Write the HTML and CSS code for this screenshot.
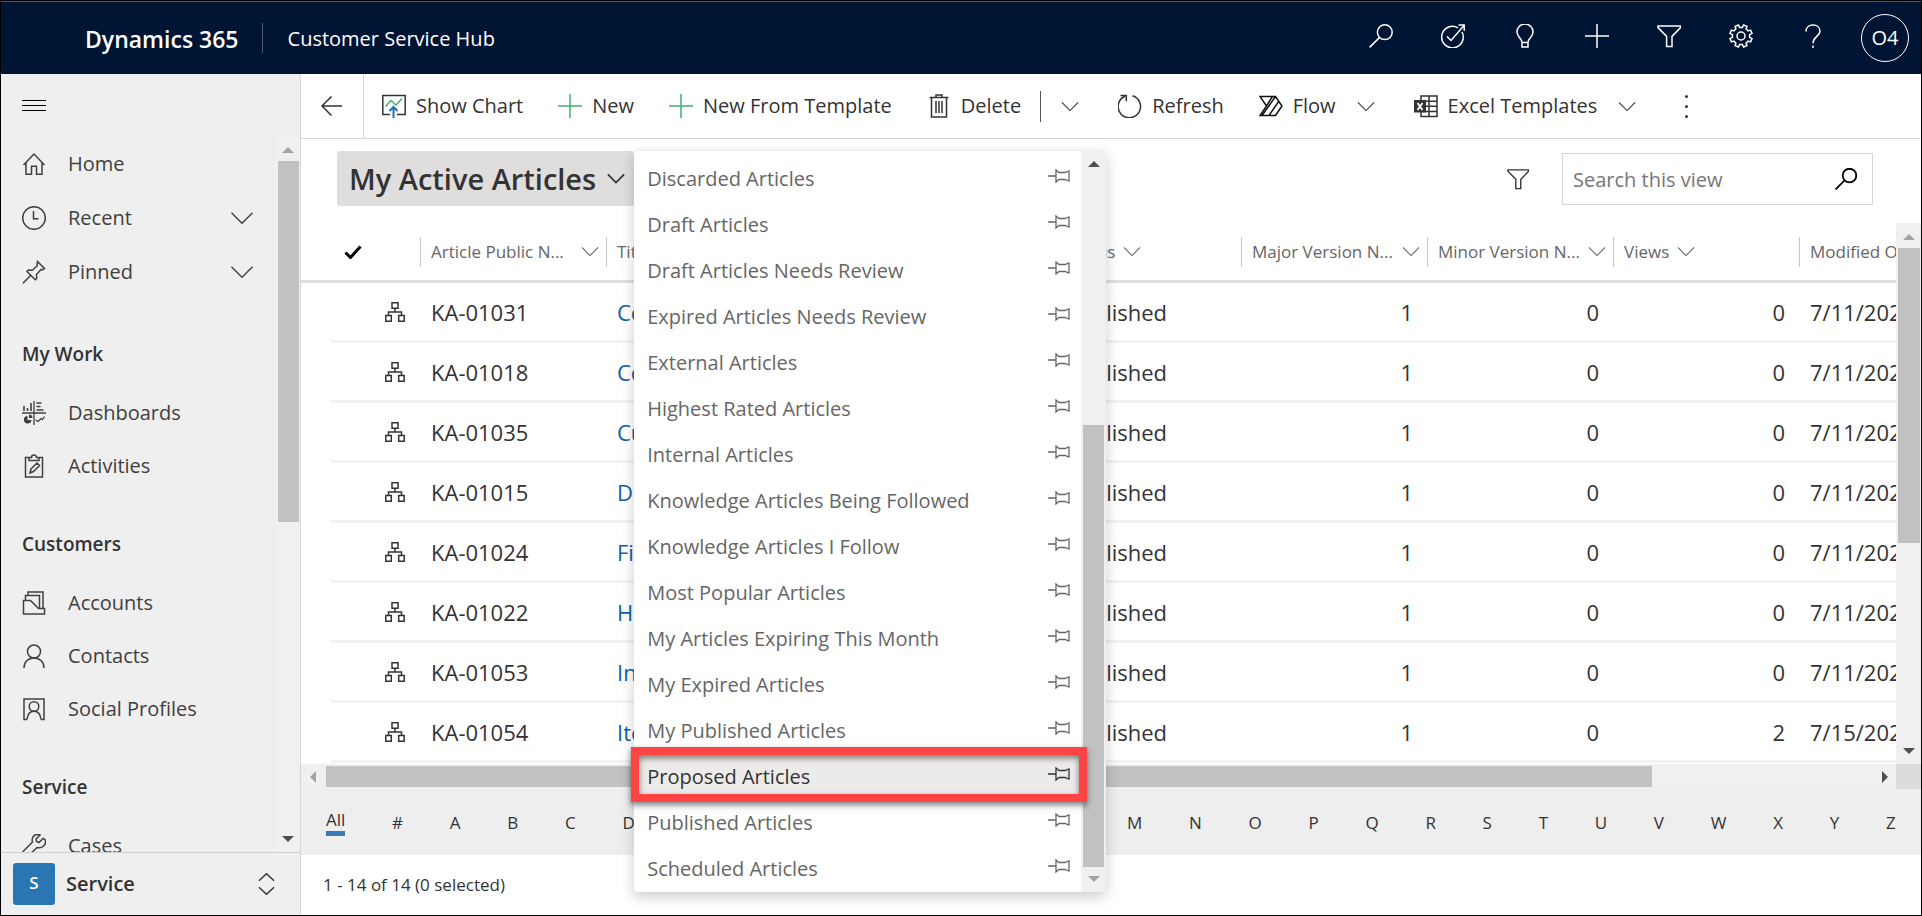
FILE: index.html
```html
<!DOCTYPE html>
<html lang="en">
<head>
<meta charset="utf-8">
<title>My Active Articles - Dynamics 365</title>
<link rel="stylesheet" href="styles.css">
</head>
<body>
<svg class="defs" aria-hidden="true">
  <symbol id="i-search" viewBox="0 0 24 24"><circle cx="15.8" cy="8.2" r="7.4"/><path d="M10.4 13.6L.6 23.4"/></symbol>
  <symbol id="i-goal" viewBox="0 0 24 24"><path d="M17 3.8A10.8 10.8 0 1 0 21 8"/><path d="M6 12.5l4 4L23 1.5M17.5 1h5.7v5.7"/></symbol>
  <symbol id="i-bulb" viewBox="0 0 24 24"><path d="M9 23v-5c0-3-5-5-5-10a8 8 0 0 1 16 0c0 5-5 7-5 10v5zM9 18.6h6"/></symbol>
  <symbol id="i-plus" viewBox="0 0 24 24"><path d="M12 0v24M0 12h24"/></symbol>
  <symbol id="i-funnel" viewBox="0 0 24 24"><path d="M1 2h22.5v1.6L15 12.4V22.5H9.600V12.4L1 3.600z"/></symbol>
  <symbol id="i-gear" viewBox="-12 -12 24 24"><path d="M8.600 1.400L11 2.600 9.600 5.900 7.100 5.100 5.100 7.100 5.900 9.600 2.600 11 1.400 8.600-1.400 8.600-2.600 11-5.900 9.600-5.100 7.100-7.100 5.100-9.600 5.900-11 2.600-8.600 1.400-8.600-1.400-11-2.600-9.600-5.900-7.100-5.100-5.100-7.100-5.900-9.600-2.600-11-1.400-8.600 1.400-8.600 2.600-11 5.900-9.600 5.100-7.100 7.100-5.100 9.600-5.900 11-2.600 8.600-1.400z"/><circle r="4"/></symbol>
  <symbol id="i-help" viewBox="0 0 24 24"><path d="M5 7.500C5 3.500 8 1 12 1s7 2.500 7 6.200c0 5.300-7 5.300-7 12M12 21.500v2.500"/></symbol>
  <symbol id="i-home" viewBox="0 0 24 24"><path d="M1.500 13L12 2l10.500 11M4 10.800V22.200h5.500v-8h5v8H20V10.800"/></symbol>
  <symbol id="i-clock" viewBox="0 0 24 24"><circle cx="12" cy="12" r="11.300"/><path d="M11.500 5v7.800h5"/></symbol>
  <symbol id="i-pin" viewBox="0 0 24 24"><path d="M15.500 1.500l7 7-1.500 1.200-2-.2-4.500 5 .2 4-1.400 1.300-8.300-8.300 1.300-1.400 4 .2 5-4.500-.2-2zM8.500 15.500L1 23.200"/></symbol>
  <symbol id="i-dash" viewBox="0 0 24 24"><path d="M2 10V5M5.500 10V7M9 10V2" stroke-width="1.600"/><path d="M12 0v24M0 12h24M14.500 2h5M14.500 5.500h4M14.500 9h7M13.500 19l2.500 1.500 3-3 1.500 1 2-3" stroke-width="1.300"/><path d="M5.500 15a3.800 3.800 0 1 0 4 4h-4zM7 13.500v3.500h3.500A3.500 3.500 0 0 0 7 13.500z" fill="currentColor" stroke="none"/></symbol>
  <symbol id="i-clip" viewBox="0 0 24 24"><path d="M8 3.500H3.500v19.500h17V3.500H16M7 3.500v3h10v-3h-2.500a2.500 2.500 0 0 0-5 0zM8 19l1-4 6-6 2.500 2.500-6 6z"/></symbol>
  <symbol id="i-folder" viewBox="0 0 24 24"><path d="M1.500 23V9.500h7l8 8h6V23zM3.500 9V4.500h14V18M6 4V1h15v16"/></symbol>
  <symbol id="i-person" viewBox="0 0 24 24"><circle cx="12" cy="7.500" r="6.500"/><path d="M2 24c0-6 4-10 10-10s10 4 10 10"/></symbol>
  <symbol id="i-profile" viewBox="0 0 24 24"><path d="M5 22.500H2V2h20v20.500h-3"/><circle cx="12" cy="9.500" r="4.800"/><path d="M5 22.500c.5-5 3-8.200 7-8.200s6.500 3.200 7 8.200"/></symbol>
  <symbol id="i-wrench" viewBox="0 0 24 24"><path d="M21 4.500l-4 4-2.500-1L14 5l4-4c-5-2-9 2-7.500 7L1 17.500V21l2 2h2.500L15 13.500c5 1.500 10-3 8-8z"/></symbol>
  <symbol id="i-back" viewBox="0 0 24 24"><path d="M22 12H2M11.500 2.500L2 12l9.500 9.500"/></symbol>
  <symbol id="i-chart" viewBox="0 0 24 24"><path d="M8 20.500H.8V1.500h22.400v19H15"/><path d="M3.500 12.500l5.500-6 5 4.500 6-6.500" class="green"/><path d="M11.500 24V13.500M7.500 17l4-4 4 4" class="blue"/></symbol>
  <symbol id="i-trash" viewBox="0 0 24 24"><path d="M2.500 3.500h19M4.500 3.500V23h15V3.500M9 3V1h6v2M9 7v12M12 7v12M15 7v12"/></symbol>
  <symbol id="i-refresh" viewBox="0 0 24 24"><path d="M14.500 1.800A11.200 11.200 0 1 1 7 2.200M2.500 1.500h5.800v5.800"/></symbol>
  <symbol id="i-flow" viewBox="0 0 24 24"><path d="M1 2.500h15.500L23 12l-6.500 9.500H1L7.500 12zM16.500 2.500L3 21.500M20 7L10 21.500M7.500 12l6-9.500"/></symbol>
  <symbol id="i-excel" viewBox="0 0 24 24"><path d="M7 2h16v20.500H7zM15 2v20M7 7.200h16M7 12.300h16M7 17.400h16"/><path d="M0 6h12v12.500H0z" fill="currentColor" stroke="none"/><path d="M3.500 9l5 7M8.500 9l-5 7" stroke="#fff" stroke-width="1.800"/></symbol>
  <symbol id="i-chev" viewBox="0 0 20 12"><path d="M1 1.500l9 9 9-9"/></symbol>
  <symbol id="i-updown" viewBox="0 0 18 24"><path d="M1 8.500L9 1l8 7.500M1 15.500L9 23l8-7.500"/></symbol>
  <symbol id="i-check" viewBox="0 0 18 14"><path d="M1.500 7.500l5 5L16.500 1.500" stroke-width="3"/></symbol>
  <symbol id="i-tree" viewBox="0 0 20 20"><path d="M7 .8h6v5.500H7zM.8 13.500h5.500v5.700H.8zM13.700 13.500h5.500v5.700h-5.500zM10 6.300V10M3.500 13.500V10h13v3.500"/></symbol>
  <symbol id="i-pushpin" viewBox="0 0 22 14"><path d="M0 7h8M8 1v12l3-2.500h6l4 1.500V2l-4 1.500h-6z"/></symbol>
</svg>

<div class="app">
  <header class="topbar">
    <span class="brand">Dynamics 365</span>
    <span class="app-name">Customer Service Hub</span>
    <div class="top-actions">
      <button aria-label="Search"><svg class="icon"><use href="#i-search"/></svg></button>
      <button aria-label="Task flow"><svg class="icon"><use href="#i-goal"/></svg></button>
      <button aria-label="Assistant"><svg class="icon"><use href="#i-bulb"/></svg></button>
      <button aria-label="Quick create"><svg class="icon"><use href="#i-plus"/></svg></button>
      <button aria-label="Advanced find"><svg class="icon"><use href="#i-funnel"/></svg></button>
      <button aria-label="Settings"><svg class="icon"><use href="#i-gear"/></svg></button>
      <button aria-label="Help"><svg class="icon"><use href="#i-help"/></svg></button>
    </div>
    <button class="avatar">O4</button>
  </header>

  <aside class="sidebar">
    <div class="side-top"><button class="burger" aria-label="Toggle site map"><span></span><span></span><span></span></button></div>
    <div class="side-body">
      <nav class="side-list">
        <div class="side-main">
          <a class="nav-item" href="#"><svg class="icon"><use href="#i-home"/></svg><span>Home</span></a>
          <a class="nav-item" href="#"><svg class="icon"><use href="#i-clock"/></svg><span>Recent</span><svg class="chev-lg"><use href="#i-chev"/></svg></a>
          <a class="nav-item" href="#"><svg class="icon"><use href="#i-pin"/></svg><span>Pinned</span><svg class="chev-lg"><use href="#i-chev"/></svg></a>
        </div>
        <h2>My Work</h2>
        <a class="nav-item" href="#"><svg class="icon"><use href="#i-dash"/></svg><span>Dashboards</span></a>
        <a class="nav-item" href="#"><svg class="icon"><use href="#i-clip"/></svg><span>Activities</span></a>
        <h2>Customers</h2>
        <a class="nav-item" href="#"><svg class="icon"><use href="#i-folder"/></svg><span>Accounts</span></a>
        <a class="nav-item" href="#"><svg class="icon"><use href="#i-person"/></svg><span>Contacts</span></a>
        <a class="nav-item" href="#"><svg class="icon"><use href="#i-profile"/></svg><span>Social Profiles</span></a>
        <h2>Service</h2>
        <a class="nav-item" href="#"><svg class="icon"><use href="#i-wrench"/></svg><span>Cases</span></a>
      </nav>
      <div class="vbar side-bar"><i class="arrow up dim"></i><i class="thumb"></i><i class="arrow down"></i></div>
    </div>
    <button class="area"><span class="area-badge">S</span><span class="area-name">Service</span><svg class="updown"><use href="#i-updown"/></svg></button>
  </aside>

  <main class="main">
    <div class="commands">
      <button class="back" aria-label="Back"><svg class="icon"><use href="#i-back"/></svg></button>
      <div class="command-list">
        <button class="cmd"><svg class="icon"><use href="#i-chart"/></svg>Show Chart</button>
        <button class="cmd"><svg class="icon green"><use href="#i-plus"/></svg>New</button>
        <button class="cmd"><svg class="icon green"><use href="#i-plus"/></svg>New From Template</button>
        <button class="cmd"><svg class="icon"><use href="#i-trash"/></svg>Delete</button>
        <button class="cmd split" aria-label="More delete options"><svg class="chev"><use href="#i-chev"/></svg></button>
        <button class="cmd"><svg class="icon"><use href="#i-refresh"/></svg>Refresh</button>
        <button class="cmd"><svg class="icon dark"><use href="#i-flow"/></svg>Flow<svg class="chev"><use href="#i-chev"/></svg></button>
        <button class="cmd"><svg class="icon"><use href="#i-excel"/></svg>Excel Templates<svg class="chev"><use href="#i-chev"/></svg></button>
        <button class="cmd more" aria-label="More commands"><i></i><i></i><i></i></button>
      </div>
    </div>

    <div class="view-bar">
      <div class="view-switch">
        <button class="view-button">My Active Articles<svg class="chev"><use href="#i-chev"/></svg></button>
        <div class="view-menu">
          <ul>
            <li><a href="#">Discarded Articles</a><svg class="pushpin"><use href="#i-pushpin"/></svg></li>
            <li><a href="#">Draft Articles</a><svg class="pushpin"><use href="#i-pushpin"/></svg></li>
            <li><a href="#">Draft Articles Needs Review</a><svg class="pushpin"><use href="#i-pushpin"/></svg></li>
            <li><a href="#">Expired Articles Needs Review</a><svg class="pushpin"><use href="#i-pushpin"/></svg></li>
            <li><a href="#">External Articles</a><svg class="pushpin"><use href="#i-pushpin"/></svg></li>
            <li><a href="#">Highest Rated Articles</a><svg class="pushpin"><use href="#i-pushpin"/></svg></li>
            <li><a href="#">Internal Articles</a><svg class="pushpin"><use href="#i-pushpin"/></svg></li>
            <li><a href="#">Knowledge Articles Being Followed</a><svg class="pushpin"><use href="#i-pushpin"/></svg></li>
            <li><a href="#">Knowledge Articles I Follow</a><svg class="pushpin"><use href="#i-pushpin"/></svg></li>
            <li><a href="#">Most Popular Articles</a><svg class="pushpin"><use href="#i-pushpin"/></svg></li>
            <li><a href="#">My Articles Expiring This Month</a><svg class="pushpin"><use href="#i-pushpin"/></svg></li>
            <li><a href="#">My Expired Articles</a><svg class="pushpin"><use href="#i-pushpin"/></svg></li>
            <li><a href="#">My Published Articles</a><svg class="pushpin"><use href="#i-pushpin"/></svg></li>
            <li class="current"><a href="#">Proposed Articles</a><svg class="pushpin"><use href="#i-pushpin"/></svg><span class="callout"></span></li>
            <li><a href="#">Published Articles</a><svg class="pushpin"><use href="#i-pushpin"/></svg></li>
            <li><a href="#">Scheduled Articles</a><svg class="pushpin"><use href="#i-pushpin"/></svg></li>
          </ul>
          <div class="vbar menu-bar"><i class="arrow up"></i><i class="thumb"></i><i class="arrow down dim"></i></div>
        </div>
      </div>
      <div class="view-tools">
        <button class="filter" aria-label="Filter"><svg class="icon-sm"><use href="#i-funnel"/></svg></button>
        <div class="search">
          <input type="search" placeholder="Search this view" aria-label="Search this view">
          <button aria-label="Start search"><svg class="icon-sm"><use href="#i-search"/></svg></button>
        </div>
      </div>
    </div>

    <div class="grid-area">
      <div class="grid-scroll">
        <table>
          <colgroup><col class="c-gap"><col class="c-check"><col class="c-icon"><col class="c-std"><col class="c-title"><col class="c-std"><col class="c-std"><col class="c-std"><col class="c-std"><col class="c-std"></colgroup>
          <thead>
            <tr>
              <th></th>
              <th><svg class="check"><use href="#i-check"/></svg></th>
              <th></th>
              <th><div class="head cut"><span>Article Public N...</span><svg class="chev"><use href="#i-chev"/></svg></div></th>
              <th><div class="head"><span>Title</span></div></th>
              <th><div class="head"><span>Status</span><svg class="chev"><use href="#i-chev"/></svg></div></th>
              <th><div class="head cut"><span>Major Version N...</span><svg class="chev"><use href="#i-chev"/></svg></div></th>
              <th><div class="head cut"><span>Minor Version N...</span><svg class="chev"><use href="#i-chev"/></svg></div></th>
              <th><div class="head"><span>Views</span><svg class="chev"><use href="#i-chev"/></svg></div></th>
              <th><div class="head"><span>Modified On</span></div></th>
            </tr>
          </thead>
          <tbody>
            <tr><td></td><td></td><td><svg class="tree"><use href="#i-tree"/></svg></td><td>KA-01031</td><td><a href="#">Co</a></td><td>Published</td><td class="num">1</td><td class="num">0</td><td class="num">0</td><td>7/11/2020</td></tr>
            <tr><td></td><td></td><td><svg class="tree"><use href="#i-tree"/></svg></td><td>KA-01018</td><td><a href="#">Co</a></td><td>Published</td><td class="num">1</td><td class="num">0</td><td class="num">0</td><td>7/11/2020</td></tr>
            <tr><td></td><td></td><td><svg class="tree"><use href="#i-tree"/></svg></td><td>KA-01035</td><td><a href="#">Cu</a></td><td>Published</td><td class="num">1</td><td class="num">0</td><td class="num">0</td><td>7/11/2020</td></tr>
            <tr><td></td><td></td><td><svg class="tree"><use href="#i-tree"/></svg></td><td>KA-01015</td><td><a href="#">De</a></td><td>Published</td><td class="num">1</td><td class="num">0</td><td class="num">0</td><td>7/11/2020</td></tr>
            <tr><td></td><td></td><td><svg class="tree"><use href="#i-tree"/></svg></td><td>KA-01024</td><td><a href="#">Fix</a></td><td>Published</td><td class="num">1</td><td class="num">0</td><td class="num">0</td><td>7/11/2020</td></tr>
            <tr><td></td><td></td><td><svg class="tree"><use href="#i-tree"/></svg></td><td>KA-01022</td><td><a href="#">Ho</a></td><td>Published</td><td class="num">1</td><td class="num">0</td><td class="num">0</td><td>7/11/2020</td></tr>
            <tr><td></td><td></td><td><svg class="tree"><use href="#i-tree"/></svg></td><td>KA-01053</td><td><a href="#">In</a></td><td>Published</td><td class="num">1</td><td class="num">0</td><td class="num">0</td><td>7/11/2020</td></tr>
            <tr><td></td><td></td><td><svg class="tree"><use href="#i-tree"/></svg></td><td>KA-01054</td><td><a href="#">Ite</a></td><td>Published</td><td class="num">1</td><td class="num">0</td><td class="num">2</td><td>7/15/2020</td></tr>
          </tbody>
        </table>
      </div>
      <div class="vbar grid-bar"><i class="arrow up dim"></i><i class="thumb"></i><i class="arrow down"></i></div>
    </div>
    <div class="hbar"><div class="hbar-track"><i class="arrow left dim"></i><i class="thumb"></i><i class="arrow right"></i></div><div class="corner"></div></div>

    <nav class="jump">
      <a href="#" class="on">All</a><a href="#">#</a><a href="#">A</a><a href="#">B</a><a href="#">C</a><a href="#">D</a><a href="#">E</a><a href="#">F</a><a href="#">G</a><a href="#">H</a><a href="#">I</a><a href="#">J</a><a href="#">K</a><a href="#">L</a><a href="#">M</a><a href="#">N</a><a href="#">O</a><a href="#">P</a><a href="#">Q</a><a href="#">R</a><a href="#">S</a><a href="#">T</a><a href="#">U</a><a href="#">V</a><a href="#">W</a><a href="#">X</a><a href="#">Y</a><a href="#">Z</a>
    </nav>
    <footer class="status">1 - 14 of 14 (0 selected)</footer>
  </main>
</div>
</body>
</html>
```

FILE: styles.css
```css
* { box-sizing: border-box; }
body { margin: 0; background: #000; color: #333; font-family: "Segoe UI", "Open Sans", "Noto Sans", sans-serif; font-size: 20px; line-height: 28px; }
button, input { font: inherit; color: inherit; background: none; border: 0; padding: 0; margin: 0; }
a { color: inherit; text-decoration: none; }
svg { flex: none; fill: none; stroke: currentColor; stroke-width: 1.5; }
button { display: flex; align-items: center; white-space: nowrap; }
.defs { position: absolute; width: 0; height: 0; }
.icon { width: 24px; height: 24px; }
.icon-sm { width: 22px; height: 22px; }
.chev { width: 18px; height: 11px; stroke-width: 1.2; }
.chev-lg { width: 24px; height: 14px; margin-left: auto; stroke-width: 1.2; }
.green { stroke: #3fb36e; }
.blue { stroke: #1f6fbf; stroke-width: 2; }
.dark { color: #111; }

.app { display: grid; grid-template: auto 1fr / 300px 1fr; height: 100vh; border: 1px solid #000; background: #fff; }

/* Top bar */
.topbar { grid-column: 1 / -1; display: flex; align-items: center; height: 73px; padding: 0 12px 0 84px; background: #001433; border-top: 1px solid #55565a; color: #fff; }
.brand { padding-top: 2px; font-size: 23px; font-weight: 600; margin-right: 23px; }
.app-name { border-left: 1px solid #4d5a70; line-height: 28px; padding: 2px 0 0 25px; }
.top-actions { display: flex; gap: 48px; margin-left: auto; padding-bottom: 4px; }
.avatar { justify-content: center; width: 48px; height: 48px; margin-left: 36px; border: 1px solid #fff; border-radius: 50%; }

/* Scroll bars */
.vbar { display: flex; flex-direction: column; align-items: center; background: #f0f0f0; }
.thumb { background: #c1c1c1; }
.arrow { width: 0; height: 0; border: 6px solid transparent; color: #505050; }
.arrow.dim { color: #a3a3a3; }
.up { border-top: 0; border-bottom-color: currentColor; }
.down { border-bottom: 0; border-top-color: currentColor; margin-top: auto; }
.left { border-left: 0; border-right-color: currentColor; }
.right { border-right: 0; border-left-color: currentColor; margin-left: auto; }

/* Site map */
.sidebar { display: flex; flex-direction: column; min-height: 0; background: #efefef; border-right: 1px solid #d6d6d6; }
.side-top { display: flex; align-items: center; height: 63px; padding-left: 21px; }
.burger { flex-direction: column; gap: 4px; }
.burger span { width: 24px; height: 1px; background: #000; }
.side-body { flex: 1; display: flex; min-height: 0; }
.side-list { flex: 1; overflow: hidden; padding: 0 22px 0 21px; }
.side-main { display: flex; flex-direction: column; gap: 1px; padding-bottom: 4px; }
.nav-item { display: flex; align-items: center; gap: 22px; height: 53px; color: #404040; }
.side-list h2 { margin: 26px 0 5px; font-size: 19px; font-weight: 600; line-height: 53px; }
.side-bar { width: 24px; padding: 10px 0; }
.side-bar .thumb { width: 21px; height: 52%; margin-top: 8px; }
.area { height: 63px; padding: 0 25px 0 12px; gap: 11px; border-top: 1px solid #cfcfcf; }
.area-badge { width: 42px; line-height: 40px; padding-bottom: 2px; border-radius: 3px; background: #2a76b3; color: #fff; font-size: 17px; font-weight: 600; text-align: center; }
.area-name { font-weight: 600; }
.updown { width: 17px; height: 24px; margin-left: auto; }

/* Command bar */
.main { display: flex; flex-direction: column; min-width: 0; min-height: 0; }
.commands { display: flex; height: 65px; border-bottom: 1px solid #d6d6d6; }
.back { width: 63px; justify-content: center; border-right: 1px solid #d6d6d6; }
.command-list { display: flex; align-items: center; gap: 35px; padding-left: 18px; }
.cmd { gap: 10px; }
.cmd .chev { margin: 0 4px 0 11px; }
.split { height: 31px; margin: 0 0 0 -16px; border-left: 1px solid #555; }
.split .chev { margin-left: 20px; }
.more { flex-direction: column; gap: 7px; margin-left: 10px; }
.more i { width: 3px; height: 3px; border-radius: 50%; background: #333; }

/* View bar */
.view-bar { display: flex; align-items: center; justify-content: space-between; height: 84px; padding: 12px 48px 17px 36px; }
.view-switch { position: relative; }
.view-button { height: 55px; padding: 0 9px 0 12px; gap: 11px; background: #e0dedd; border-radius: 3px; font-size: 29px; font-weight: 600; }
.view-button .chev { stroke-width: 2; }
.view-menu { position: absolute; top: -1px; left: 100%; z-index: 2; display: flex; width: 472px; background: #fff; border-top: 1px solid #eee; border-radius: 4px; box-shadow: 0 5px 14px rgba(0, 0, 0, .2); color: #666; }
.view-menu ul { flex: 1; list-style: none; margin: 0; padding: 5px 0 0; }
.view-menu li { position: relative; display: flex; align-items: center; justify-content: space-between; height: 46px; padding: 0 11px 0 13px; }
.pushpin { width: 22px; height: 14px; margin-bottom: 6px; stroke-width: 1.3; }
.view-menu .current { background: #edebe9; color: #333; }
.callout { position: absolute; inset: -7px -6px -2px -3px; z-index: 1; border: 8px solid #fd4343; box-shadow: 0 3px 6px rgba(0, 0, 0, .5), inset 0 3px 6px rgba(0, 0, 0, .5); pointer-events: none; }
.menu-bar { width: 25px; padding: 10px 0; border-radius: 0 4px 4px 0; }
.menu-bar .thumb { width: 21px; height: 442px; margin-top: auto; }
.menu-bar .down { margin-top: 9px; }
.view-tools { display: flex; align-items: center; gap: 33px; }
.search { display: flex; align-items: center; width: 311px; height: 52px; padding: 0 15px 0 10px; border: 1px solid #d6d6d6; }
.search input { flex: 1; min-width: 0; padding-top: 3px; outline: 0; }
.search input::placeholder { color: #767676; opacity: 1; }
.search button { color: #000; }
.search svg { stroke-width: 2; }

/* Grid */
.grid-area { flex: 1; display: flex; min-height: 0; }
.grid-scroll { flex: 1; min-width: 0; overflow: hidden; }
table { width: 1684px; table-layout: fixed; border-collapse: separate; border-spacing: 0; }
.c-gap { width: 30px; }
.c-check { width: 42px; }
.c-icon { width: 47px; }
.c-std { width: 186px; }
.c-title { width: 449px; }
th { height: 60px; padding: 0; border-bottom: 3px solid #e1dfdd; font-weight: 400; color: #666; text-align: left; }
td { height: 60px; padding: 0 14px 0 11px; border-bottom: 3px solid #f3f2f1; font-size: 22px; }
td:first-child { border-bottom: 0; }
td a { color: #115ea3; }
.num { text-align: right; }
.head { display: flex; align-items: center; gap: 8px; height: 30px; padding: 0 7px 0 10px; border-left: 1px solid #c8c8c8; font-size: 17px; white-space: nowrap; }
.cut span { flex: 1; }
.check { display: block; width: 18px; height: 14px; margin-left: 13px; color: #000; }
.tree { display: block; width: 20px; height: 20px; margin-left: 1px; }
.grid-bar { width: 25px; padding: 11px 0 10px; }
.grid-bar .thumb { width: 22px; height: 295px; margin-top: 8px; }
.hbar { display: flex; height: 25px; }
.hbar-track { flex: 1; display: flex; align-items: center; padding: 0 8px 0 9px; background: #f0f0f0; }
.hbar .thumb { width: 84%; height: 21px; margin-left: 10px; }
.corner { width: 25px; background: #dcdcdc; }

/* Jump bar and status */
.jump { display: flex; justify-content: space-between; align-items: center; height: 66px; padding: 0 25px; background: #eee; font-size: 17px; line-height: 25px; }
.jump .on { border-bottom: 5px solid #3b79b7; line-height: 22px; }
.status { padding: 16px 22px; font-size: 17px; }
```
